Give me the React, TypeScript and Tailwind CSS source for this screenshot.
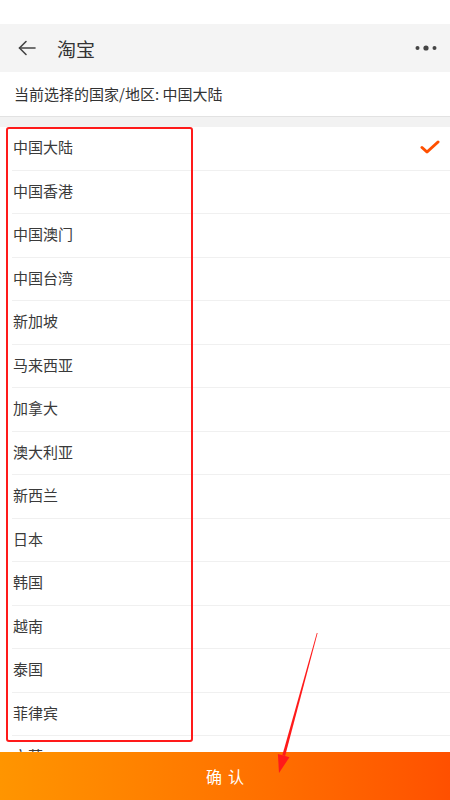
import React from 'react';

const regions = [
  '中国大陆',
  '中国香港',
  '中国澳门',
  '中国台湾',
  '新加坡',
  '马来西亚',
  '加拿大',
  '澳大利亚',
  '新西兰',
  '日本',
  '韩国',
  '越南',
  '泰国',
  '菲律宾',
  '文莱',
  '印度尼西亚',
];

const font = { fontFamily: '"Noto Sans CJK SC", "Noto Sans", sans-serif' };

const App: React.FC = () => {
  const selected = '中国大陆';

  return (
    <div className="relative w-[450px] h-[800px] flex flex-col bg-white overflow-hidden text-[#333]" style={font}>
      {/* status bar */}
      <div className="h-6 bg-white shrink-0" />

      {/* Header */}
      <div className="h-12 shrink-0 bg-[#f4f4f4] flex items-center pl-[17px] pr-[13px]">
        <svg width="20" height="20" viewBox="0 0 20 20" fill="none" stroke="#444" strokeWidth="1.6" strokeLinecap="round" strokeLinejoin="round">
          <path d="M18 10H2.5" />
          <path d="M9 3.5L2.5 10L9 16.5" />
        </svg>
        <span className="ml-[20px] text-[19px] leading-none text-[#333]">淘宝</span>
        <div className="flex-1" />
        <svg width="22" height="8" viewBox="0 0 22 8" fill="#444">
          <circle cx="2.5" cy="4" r="2" />
          <circle cx="11" cy="4" r="2.6" />
          <circle cx="19.5" cy="4" r="2" />
        </svg>
      </div>

      {/* Current selection */}
      <div className="h-[44px] shrink-0 flex items-center px-[14px] text-[15px] text-[#333]">
        当前选择的国家/地区: 中国大陆
      </div>
      <div className="h-[11px] shrink-0 bg-[#f2f2f2] border-t border-[#e2e2e2]" />

      {/* List */}
      <div className="flex-1 overflow-hidden">
        {regions.map((name) => (
          <div key={name} className="h-[43.5px] pl-[12px] flex">
            <div className="flex-1 flex items-center border-b border-[#f0f0f0] pr-[10px] pb-[2px]">
              <span className="text-[15px] text-[#3a3a3a] pl-px">{name}</span>
              <div className="flex-1" />
              {name === selected && (
                <svg width="20" height="16" viewBox="0 0 20 16" fill="none" stroke="#ff5000" strokeWidth="3" strokeLinecap="round" strokeLinejoin="round">
                  <path d="M2 8.5L7 13L18 3" />
                </svg>
              )}
            </div>
          </div>
        ))}
      </div>

      {/* Confirm */}
      <button className="h-12 shrink-0 w-full bg-gradient-to-r from-[#ff9500] to-[#ff5000] text-white text-[16px] flex items-center justify-center gap-[6px]">
        <span>确</span>
        <span>认</span>
      </button>

      {/* annotation box */}
      <div className="absolute left-[6px] top-[127px] w-[187px] h-[615px] border-[2.5px] border-[#ff1a1a] rounded-[3px] pointer-events-none" />

      {/* annotation arrow */}
      <svg className="absolute left-0 top-0 pointer-events-none" width="450" height="800" viewBox="0 0 450 800">
        <polygon points="317.6,633.1 316.8,632.9 282.3,755.2 285.1,756.0" fill="#ff1a1a" />
        <polygon points="289.5,757.2 277.9,754.0 279,773" fill="#ff1a1a" />
      </svg>
    </div>
  );
};

export default App;
